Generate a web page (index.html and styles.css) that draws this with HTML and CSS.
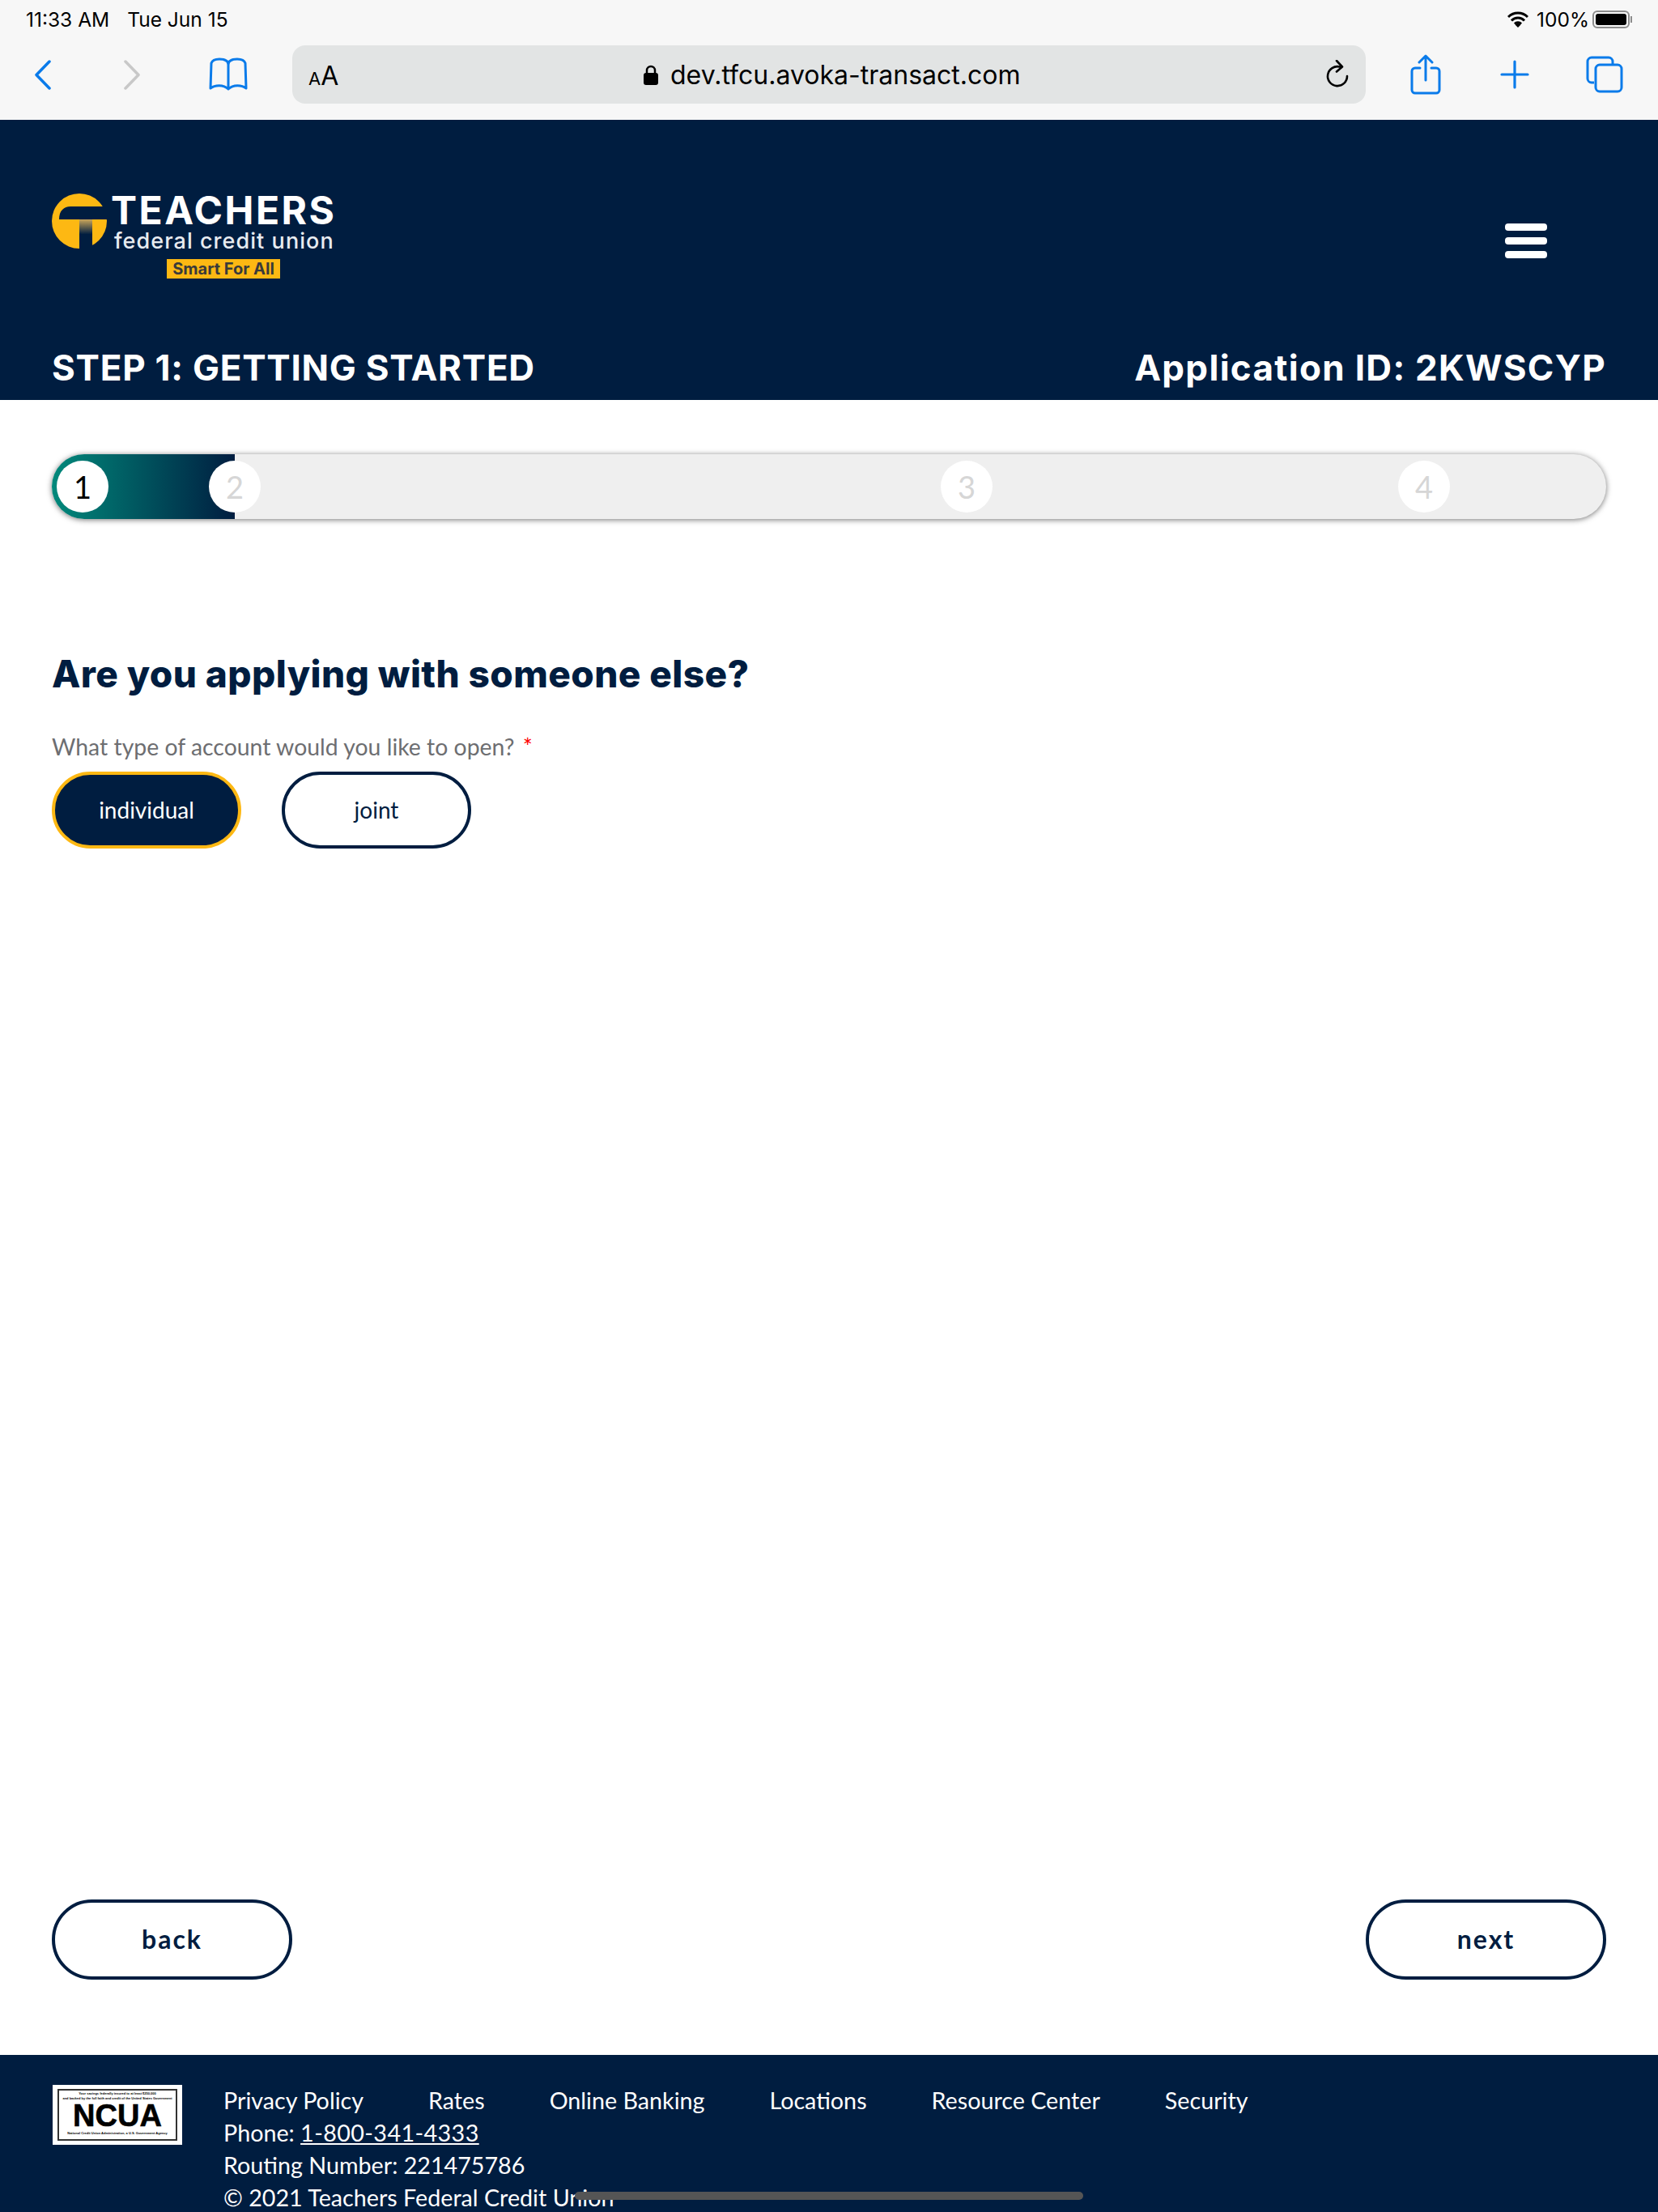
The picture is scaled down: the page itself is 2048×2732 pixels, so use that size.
FILE: index.html
```html
<!DOCTYPE html>
<html lang="en">
<head>
    <meta charset="UTF-8">
    <meta name="viewport" content="width=device-width, initial-scale=1.0">
    <title>Getting Started</title>
    <link rel="stylesheet" href="styles.css">
</head>
<body>
<div class="page">
    <div class="chrome">
        <div class="status">
            <span class="time">11:33 AM</span>
            <span class="date">Tue Jun 15</span>
            <span class="status-right">
                <svg class="wifi" width="26" height="20" viewBox="0 0 26 20"><path d="M1 7a17 17 0 0 1 24 0M5 11.5a11 11 0 0 1 16 0M9 15.5a5.500 5.500 0 0 1 8 0" fill="none" stroke="#000" stroke-width="3"/><path d="M13 20l-3.500-3.500a5 5 0 0 1 7 0z"/></svg>
                <span class="battery-text">100%</span>
                <span class="battery"><span class="battery-level"></span></span>
                <span class="battery-tip"></span>
            </span>
        </div>
        <div class="toolbar">
            <svg class="ic-back" width="21" height="37" viewBox="0 0 21 37"><path d="M19 2L3 18.500 19 35" fill="none" stroke="#0a7bea" stroke-width="3.500" stroke-linecap="round" stroke-linejoin="round"/></svg>
            <svg class="ic-forward" width="21" height="37" viewBox="0 0 21 37"><path d="M2 2l16 16.500L2 35" fill="none" stroke="#c8c8c8" stroke-width="3.500" stroke-linecap="round" stroke-linejoin="round"/></svg>
            <svg class="ic-book" width="48" height="42" viewBox="0 0 48 42"><path d="M24 9C24 4 19 2 13 2 8 2 4 4 3 7L2 38C7 34 18 33 24 39 30 33 41 34 46 38L45 7C44 4 40 2 35 2 29 2 24 4 24 9V38" fill="none" stroke="#0a7bea" stroke-width="3" stroke-linejoin="round"/></svg>
            <div class="urlbar">
                <span class="aa"><span class="aa-small">A</span>A</span>
                <span class="address">
                    <svg class="lock" width="18" height="25" viewBox="0 0 18 25"><path d="M4 11V7a5 5 0 0 1 10 0v4" fill="none" stroke="#000" stroke-width="2.500"/><rect x="0" y="10" width="18" height="15" rx="3"/></svg>
                    dev.tfcu.avoka-transact.com
                </span>
                <svg class="reload" width="30" height="36" viewBox="0 0 30 36"><path d="M18 8.500A12 12 0 1 0 27 20" fill="none" stroke="#000" stroke-width="2.600" stroke-linecap="round"/><path d="M14 1l7 7.500-7 6" fill="none" stroke="#000" stroke-width="2.600" stroke-linecap="round" stroke-linejoin="round"/></svg>
            </div>
            <svg class="ic-share" width="38" height="50" viewBox="0 0 38 50"><path d="M12 17H6a4 4 0 0 0-4 4v23a4 4 0 0 0 4 4h26a4 4 0 0 0 4-4V21a4 4 0 0 0-4-4h-6M19 32V3M11 10l8-8 8 8" fill="none" stroke="#0a7bea" stroke-width="3" stroke-linecap="round" stroke-linejoin="round"/></svg>
            <svg class="ic-plus" width="36" height="36" viewBox="0 0 36 36"><path d="M18 2v32M2 18h32" fill="none" stroke="#0a7bea" stroke-width="3.200" stroke-linecap="round"/></svg>
            <svg class="ic-tabs" width="46" height="46" viewBox="0 0 46 46"><path d="M10 33H7a5 5 0 0 1-5-5V7a5 5 0 0 1 5-5h21a5 5 0 0 1 5 5v3" fill="none" stroke="#0a7bea" stroke-width="3"/><rect x="12" y="11" width="32" height="33" rx="5" fill="none" stroke="#0a7bea" stroke-width="3"/></svg>
        </div>
    </div>

    <header class="site-header">
        <div class="header-top">
            <div class="logo">
                <svg class="logo-mark" width="68" height="70" viewBox="0 0 68 70">
                    <defs><linearGradient id="stem" x1="0" y1="0" x2="0" y2="1"><stop offset="0" stop-color="#c9a55a"/><stop offset="0.5" stop-color="#001d40"/></linearGradient></defs>
                    <circle cx="34" cy="35" r="34" fill="#fdb813"/>
                    <path d="M9 33c0-11 6-16 14-16h45v16z" fill="#001d40"/>
                    <path d="M34 33h16v33c-5 3-11 4-16 4z" fill="url(#stem)"/>
                </svg>
                <div class="logo-text">
                    <div class="logo-name">TEACHERS</div>
                    <div class="logo-sub">federal credit union</div>
                    <div class="logo-tag">Smart For All</div>
                </div>
            </div>
            <div class="burger"><span></span><span></span><span></span></div>
        </div>
        <div class="header-bottom">
            <div class="step-title">STEP 1: GETTING STARTED</div>
            <div class="app-id">Application ID: 2KWSCYP</div>
        </div>
    </header>

    <main class="content">
        <div class="progress">
            <div class="progress-fill"></div>
            <div class="steps">
                <span class="step step-one">1</span>
                <span class="step step-two">2</span>
                <span class="step step-three">3</span>
                <span class="step step-four">4</span>
            </div>
        </div>

        <h1 class="question">Are you applying with someone else?</h1>
        <div class="field-label">What type of account would you like to open? <span class="req">*</span></div>
        <div class="choices">
            <a class="choice selected">individual</a>
            <a class="choice">joint</a>
        </div>

        <div class="nav-buttons">
            <a class="nav-button">back</a>
            <a class="nav-button">next</a>
        </div>
    </main>

    <footer class="site-footer">
        <div class="ncua">
            <div class="ncua-inner">
                <div class="ncua-small">Your savings federally insured to at least $250,000<br>and backed by the full faith and credit of the United States Government</div>
                <div class="ncua-name">NCUA</div>
                <div class="ncua-small">National Credit Union Administration, a U.S. Government Agency</div>
            </div>
        </div>
        <div class="footer-text">
            <div class="footer-links">
                <a>Privacy Policy</a>
                <a>Rates</a>
                <a>Online Banking</a>
                <a>Locations</a>
                <a>Resource Center</a>
                <a>Security</a>
            </div>
            <div>Phone: <a class="phone">1-800-341-4333</a></div>
            <div>Routing Number: 221475786</div>
            <div>&copy; 2021 Teachers Federal Credit Union</div>
        </div>
    </footer>

    <div class="home-indicator"></div>
</div>
</body>
</html>
```

FILE: styles.css
```css
* {
    box-sizing: border-box;
}
body {
    margin: 0;
    font-family: 'Lato', sans-serif;
    background-color: #fff;
    color: #001d40;
}
svg {
    display: block;
    flex: none;
}
.page {
    position: relative;
    width: 2048px;
    height: 2732px;
    overflow: hidden;
    display: flex;
    flex-direction: column;
}

/* browser bar */
.chrome {
    height: 148px;
    background: #f7f7f7;
    font-family: 'Inter', sans-serif;
    color: #000;
}
.status {
    height: 48px;
    padding: 0 32px 0 32px;
    display: flex;
    align-items: center;
    font-size: 24.5px;
}
.date {
    margin-left: 22px;
}
.status-right {
    margin-left: auto;
    display: flex;
    align-items: center;
}
.battery-text {
    margin-left: 10px;
}
.battery {
    margin-left: 4px;
    width: 46px;
    height: 22px;
    border: 2px solid #8c8c8c;
    border-radius: 6px;
    padding: 2px;
    display: flex;
}
.battery-level {
    flex: 1;
    background: #000;
    border-radius: 3px;
}
.battery-tip {
    margin-left: 1px;
    width: 2px;
    height: 8px;
    background: #8c8c8c;
}
.toolbar {
    height: 100px;
    padding: 8px 0 20px 42px;
    display: flex;
    align-items: center;
}
.ic-forward {
    margin-left: 90px;
}
.ic-book {
    margin-left: 84px;
}
.urlbar {
    margin-left: 55px;
    width: 1326px;
    height: 72px;
    background: #e2e4e4;
    border-radius: 16px;
    padding: 0 20px 0 20px;
    display: flex;
    align-items: center;
}
.aa {
    font-size: 32px;
    width: 40px;
    margin-top: 2px;
}
.aa-small {
    font-size: 22px;
}
.address {
    margin-left: 374px;
    display: flex;
    align-items: center;
    gap: 15px;
    font-size: 32px;
    white-space: nowrap;
}
.reload {
    margin-left: auto;
}
.ic-share {
    margin-left: 55px;
}
.ic-plus {
    margin-left: 73px;
}
.ic-tabs {
    margin-left: 70px;
}

/* header */
.site-header {
    height: 346px;
    background: #001d40;
    color: #fff;
    padding: 89px 64px 0;
    display: flex;
    flex-direction: column;
}
.header-top {
    display: flex;
    justify-content: space-between;
    align-items: flex-start;
}
.logo {
    display: flex;
    gap: 5px;
}
.logo-mark {
    margin-top: 1px;
}
.logo-text {
    width: 290px;
    margin-top: -3px;
}
.logo-name {
    font-family: 'Inter', sans-serif;
    font-weight: 700;
    font-size: 48px;
    line-height: 52px;
    letter-spacing: 2.5px;
}
.logo-sub {
    font-family: 'Inter', sans-serif;
    font-weight: 500;
    font-size: 27px;
    line-height: 24px;
    margin-left: 4px;
    letter-spacing: 1.05px;
    color: #e8ebf0;
}
.logo-tag {
    margin: 10px 0 0 69px;
    width: 140px;
    height: 24px;
    background: #fdb813;
    color: #3a3a3a;
    font-family: 'Inter', sans-serif;
    font-weight: 700;
    font-size: 20px;
    line-height: 24px;
    text-align: center;
}
.burger {
    margin: 39px 73px 0 0;
    width: 52px;
    display: flex;
    flex-direction: column;
    gap: 8px;
}
.burger span {
    height: 9px;
    background: #fff;
    border-radius: 4px;
}
.header-bottom {
    margin-top: auto;
    padding: 0 0 15px;
    display: flex;
    justify-content: space-between;
    font-family: 'Inter', sans-serif;
    font-weight: 700;
    font-size: 44px;
    line-height: 50px;
}
.step-title {
    letter-spacing: 0.75px;
}
.app-id {
    letter-spacing: 1.3px;
}

/* main */
.content {
    flex: 1;
    padding: 67px 64px 93px 64px;
    display: flex;
    flex-direction: column;
}
.progress {
    position: relative;
    height: 80px;
    background: #efefef;
    border-radius: 40px;
    box-shadow: 0 1px 7px rgba(0, 0, 0, 0.55);
    padding: 8px 6px;
}
.progress-fill {
    position: absolute;
    left: 0;
    top: 0;
    bottom: 0;
    width: 226px;
    border-radius: 40px 0 0 40px;
    background: linear-gradient(to right, #00897b, #001d40);
}
.steps {
    position: relative;
    display: flex;
}
.step {
    width: 64px;
    height: 64px;
    border-radius: 50%;
    background: #fff;
    color: #d6d6d6;
    font-size: 38px;
    line-height: 64px;
    text-align: center;
}
.step-one {
    color: #000;
}
.step-two {
    margin-left: 124px;
}
.step-three {
    margin-left: 840px;
}
.step-four {
    margin-left: 501px;
}
.question {
    margin: 164px 0 0;
    font-family: 'Inter', sans-serif;
    font-weight: 800;
    font-size: 46px;
    line-height: 54px;
    letter-spacing: 0.4px;
}
.field-label {
    margin-top: 45px;
    font-size: 28.4px;
    line-height: 36px;
    color: #6d6e71;
}
.req {
    color: #f00;
    margin-left: 3px;
}
.choices {
    margin-top: 13px;
    display: flex;
    gap: 50px;
}
.choice {
    width: 234px;
    height: 95px;
    border: 4px solid #001d40;
    border-radius: 48px;
    padding-bottom: 2px;
    display: flex;
    align-items: center;
    justify-content: center;
    font-size: 28px;
}
.selected {
    background: #001d40;
    border-color: #fdb813;
    color: #fff;
}
.nav-buttons {
    margin-top: auto;
    display: flex;
    justify-content: space-between;
}
.nav-button {
    width: 297px;
    height: 99px;
    border: 4px solid #001d40;
    border-radius: 50px;
    padding-bottom: 2px;
    display: flex;
    align-items: center;
    justify-content: center;
    font-size: 32px;
    font-weight: 700;
    letter-spacing: 2px;
}

/* footer */
.site-footer {
    height: 194px;
    background: #001d40;
    color: #fff;
    padding: 37px 0 0 65px;
    display: flex;
    gap: 51px;
}
.ncua {
    width: 160px;
    height: 74px;
    background: #fff;
    padding: 5px 6px;
    flex: none;
}
.ncua-inner {
    height: 100%;
    border: 2px solid #333;
    color: #000;
    text-align: center;
    overflow: hidden;
    white-space: nowrap;
}
.ncua-small {
    font-family: 'Liberation Sans', sans-serif;
    font-size: 4px;
    line-height: 6px;
    font-weight: 700;
    margin-top: 1px;
}
.ncua-name {
    font-family: 'Liberation Sans', sans-serif;
    font-weight: 700;
    font-size: 38px;
    line-height: 36px;
    -webkit-text-stroke: 0.6px #000;
}
.footer-text {
    font-size: 28.7px;
    line-height: 40px;
    margin-top: -1px;
}
.footer-links {
    display: flex;
    gap: 80px;
}
.phone {
    text-decoration: underline;
    letter-spacing: 0.4px;
}
.home-indicator {
    position: absolute;
    left: 710px;
    top: 2707px;
    width: 628px;
    height: 10px;
    border-radius: 5px;
    background: #555;
}
```
